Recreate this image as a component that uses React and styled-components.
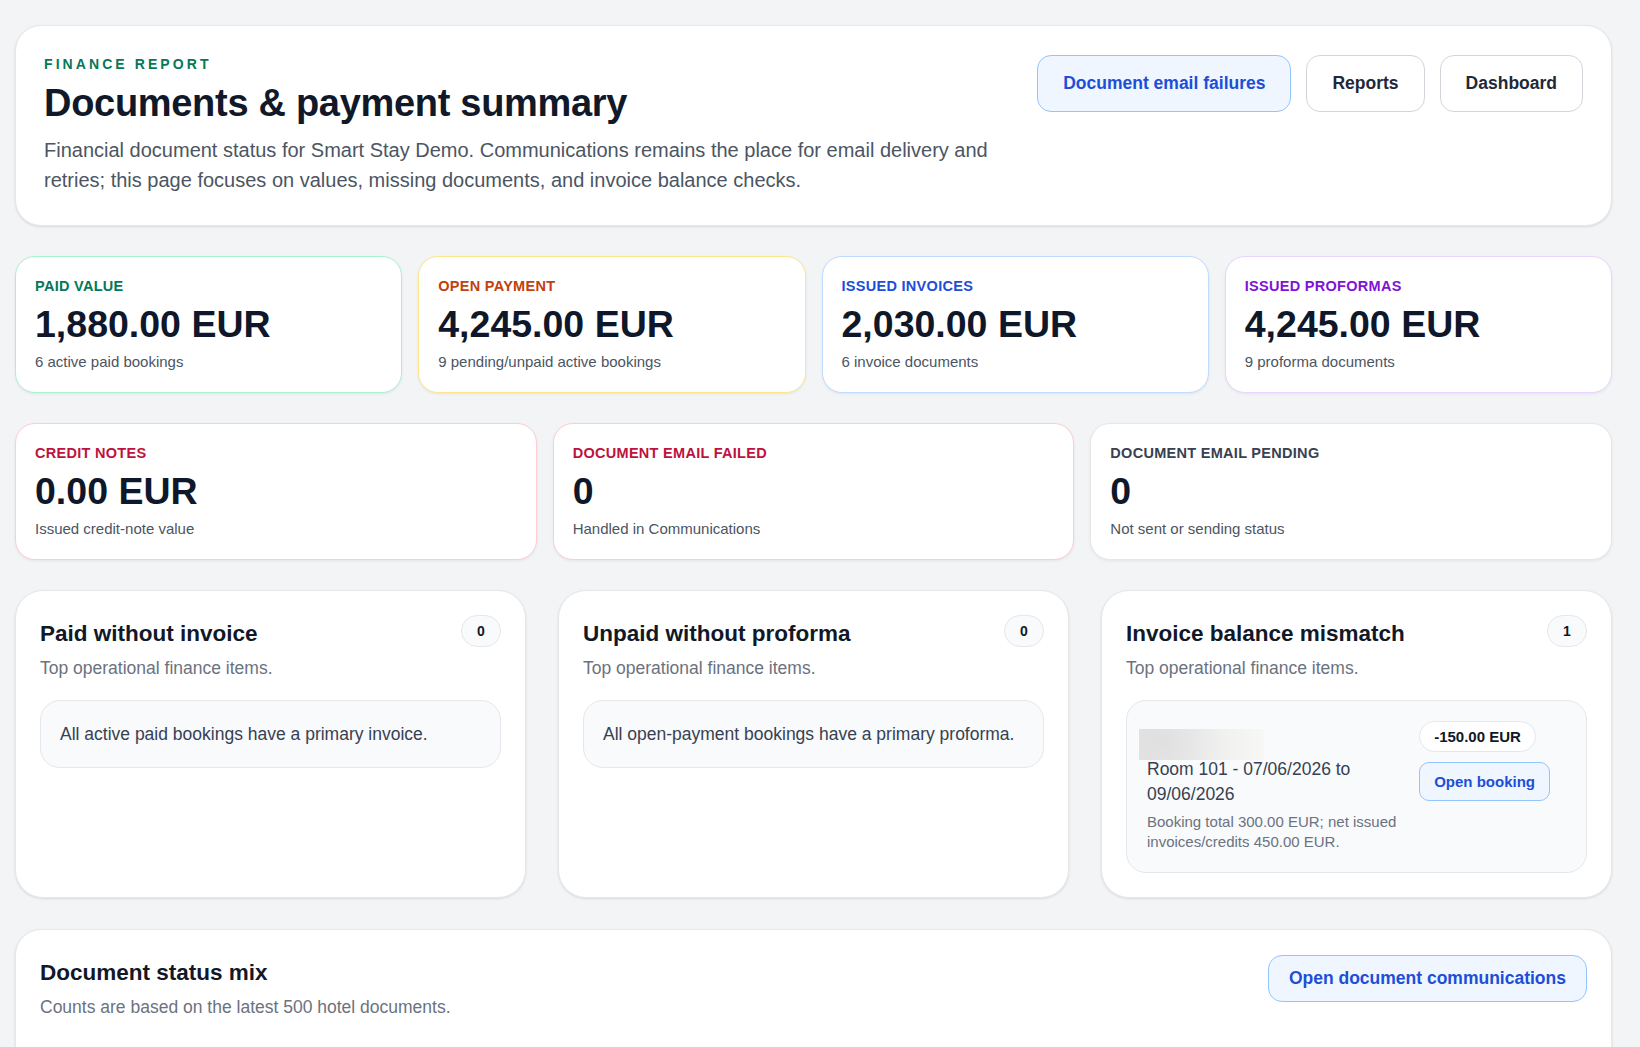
import React from 'react'
import styled, { createGlobalStyle } from 'styled-components'

const GlobalStyle = createGlobalStyle`
  * { box-sizing: border-box; }
  body {
    margin: 0;
    background: #f3f4f6;
    font-family: "Liberation Sans", Arial, sans-serif;
    color: #111827;
  }
`

const Page = styled.div`
  display: flex;
  flex-direction: column;
  gap: 30px;
  padding: 25px 28px 40px 15px;
`

const Card = styled.section`
  background: #fff;
  border: 1px solid #e5e7eb;
  border-radius: 26px;
  box-shadow: 0 1px 3px rgba(15, 23, 42, 0.08), 0 1px 2px rgba(15, 23, 42, 0.04);
`

const HeaderCard = styled(Card)`
  display: flex;
  justify-content: space-between;
  align-items: flex-start;
  gap: 24px;
  padding: 29px 28px 30px;
`

const Eyebrow = styled.div`
  margin-top: 1px;
  font-size: 14px;
  line-height: 17px;
  font-weight: 700;
  letter-spacing: 0.22em;
  text-transform: uppercase;
  color: #047857;
`

const Title = styled.h1`
  margin: 8px 0 0;
  font-size: 38px;
  line-height: 44px;
  font-weight: 700;
  letter-spacing: -0.3px;
  color: #111827;
`

const Lead = styled.p`
  margin: 10px 0 0;
  max-width: 975px;
  font-size: 20px;
  line-height: 30px;
  color: #4b5563;
`

const Actions = styled.div`
  display: flex;
  gap: 15px;
  flex-shrink: 0;
`

const Button = styled.button`
  font-family: inherit;
  font-size: ${p => p.size || 17.5}px;
  font-weight: 700;
  line-height: 21px;
  padding: ${p => p.pad || '17px 25px'};
  border-radius: ${p => p.radius || 14}px;
  border: 1px solid ${p => (p.primary ? '#93c5fd' : '#d1d5db')};
  background: ${p => (p.primary ? '#eff6ff' : '#fff')};
  color: ${p => (p.primary ? '#1d4ed8' : '#1f2937')};
  cursor: pointer;
  white-space: nowrap;
`

const StatGrid = styled.div`
  display: grid;
  grid-template-columns: repeat(${p => p.cols}, 1fr);
  gap: 16px;
`

const StatCard = styled.div`
  background: #fff;
  border: 1px solid ${p => p.border};
  border-radius: 20px;
  padding: 21px 19px 20px;
  box-shadow: 0 1px 3px rgba(15, 23, 42, 0.07);
`

const StatLabel = styled.div`
  font-size: 14.5px;
  line-height: 17px;
  font-weight: 700;
  letter-spacing: 0.02em;
  text-transform: uppercase;
  color: ${p => p.color};
`

const StatValue = styled.div`
  margin-top: 8px;
  font-size: 37.5px;
  line-height: 42px;
  font-weight: 700;
  color: #0f172a;
`

const StatNote = styled.div`
  margin-top: 7px;
  font-size: 15px;
  line-height: 20px;
  color: #4b5563;
`

const PanelGrid = styled.div`
  display: grid;
  grid-template-columns: repeat(3, 1fr);
  gap: 32px;
`

const Panel = styled(Card)`
  border-radius: 28px;
  padding: 24px;
`

const PanelHead = styled.div`
  display: flex;
  justify-content: space-between;
  align-items: flex-start;
  gap: 12px;
`

const PanelTitle = styled.h2`
  margin: 4px 0 0;
  font-size: 22.5px;
  line-height: 29px;
  font-weight: 700;
  color: #111827;
`

const PanelSub = styled.p`
  margin: 8px 0 0;
  font-size: 17.5px;
  line-height: 24px;
  color: #6b7280;
`

const CountBadge = styled.span`
  display: inline-flex;
  align-items: center;
  justify-content: center;
  min-width: 40px;
  height: 32px;
  padding: 0 12px;
  border-radius: 999px;
  border: 1px solid #e5e7eb;
  background: #f9fafb;
  font-size: 14px;
  font-weight: 700;
  color: #111827;
`

const EmptyBox = styled.div`
  margin-top: 20px;
  padding: 21px 19px;
  border: 1px solid #e5e7eb;
  border-radius: 20px;
  background: #f8fafc;
  font-size: 17.5px;
  line-height: 24px;
  color: #374151;
`

const ItemBox = styled.div`
  margin-top: 20px;
  display: grid;
  grid-template-columns: 1fr auto;
  gap: 16px;
  padding: 20px 36px 20px 20px;
  border: 1px solid #e5e7eb;
  border-radius: 20px;
  background: #f8fafc;
`

const Redacted = styled.div`
  margin: 8px 0 -3px -8px;
  width: 125px;
  height: 31px;
  background:
    radial-gradient(circle at 20% 40%, rgba(0, 0, 0, 0.03), transparent 60%),
    linear-gradient(90deg, #e5e5e5 0%, #eaeaea 40%, #f2f2f1 75%, #f7f7f5 100%);
`

const ItemTitle = styled.div`
  position: relative;
  font-size: 17.5px;
  line-height: 25px;
  color: #374151;
`

const ItemNote = styled.div`
  margin-top: 5px;
  font-size: 15px;
  line-height: 20px;
  color: #6b7280;
`

const ItemSide = styled.div`
  display: flex;
  flex-direction: column;
  align-items: flex-start;
  gap: 10px;
`

const AmountPill = styled.span`
  padding: 5px 14px;
  border-radius: 999px;
  border: 1px solid #e5e7eb;
  background: #fff;
  font-size: 15px;
  line-height: 19px;
  font-weight: 700;
  color: #111827;
`

const StatusCard = styled(Card)`
  display: flex;
  justify-content: space-between;
  align-items: flex-start;
  margin-top: 1px;
  padding: 25px 24px;
  min-height: 160px;
`

const StatusTitle = styled(PanelTitle)`
  margin-top: 3px;
`

const StatusSub = styled(PanelSub)`
  margin-top: 8px;
`

const topStats = [
  { label: 'Paid value', value: '1,880.00 EUR', note: '6 active paid bookings', color: '#047857', border: '#a7f3d0' },
  { label: 'Open payment', value: '4,245.00 EUR', note: '9 pending/unpaid active bookings', color: '#c2410c', border: '#fde68a' },
  { label: 'Issued invoices', value: '2,030.00 EUR', note: '6 invoice documents', color: '#1d4ed8', border: '#bfdbfe' },
  { label: 'Issued proformas', value: '4,245.00 EUR', note: '9 proforma documents', color: '#7e14d6', border: '#e9d5ff' },
]

const lowStats = [
  { label: 'Credit notes', value: '0.00 EUR', note: 'Issued credit-note value', color: '#be123c', border: '#fecdd3' },
  { label: 'Document email failed', value: '0', note: 'Handled in Communications', color: '#be123c', border: '#fecdd3' },
  { label: 'Document email pending', value: '0', note: 'Not sent or sending status', color: '#374151', border: '#e5e7eb' },
]

const Stat = ({ label, value, note, color, border }) => (
  <StatCard border={border}>
    <StatLabel color={color}>{label}</StatLabel>
    <StatValue>{value}</StatValue>
    <StatNote>{note}</StatNote>
  </StatCard>
)

const App = () => {
  return (
    <>
      <GlobalStyle />
      <Page>
        <HeaderCard>
          <div>
            <Eyebrow>Finance report</Eyebrow>
            <Title>Documents &amp; payment summary</Title>
            <Lead>
              Financial document status for Smart Stay Demo. Communications remains the place for email delivery and
              retries; this page focuses on values, missing documents, and invoice balance checks.
            </Lead>
          </div>
          <Actions>
            <Button primary>Document email failures</Button>
            <Button>Reports</Button>
            <Button>Dashboard</Button>
          </Actions>
        </HeaderCard>

        <StatGrid cols={4}>
          {topStats.map(s => <Stat key={s.label} {...s} />)}
        </StatGrid>

        <StatGrid cols={3}>
          {lowStats.map(s => <Stat key={s.label} {...s} />)}
        </StatGrid>

        <PanelGrid>
          <Panel>
            <PanelHead>
              <div>
                <PanelTitle>Paid without invoice</PanelTitle>
                <PanelSub>Top operational finance items.</PanelSub>
              </div>
              <CountBadge>0</CountBadge>
            </PanelHead>
            <EmptyBox>All active paid bookings have a primary invoice.</EmptyBox>
          </Panel>

          <Panel>
            <PanelHead>
              <div>
                <PanelTitle>Unpaid without proforma</PanelTitle>
                <PanelSub>Top operational finance items.</PanelSub>
              </div>
              <CountBadge>0</CountBadge>
            </PanelHead>
            <EmptyBox>All open-payment bookings have a primary proforma.</EmptyBox>
          </Panel>

          <Panel>
            <PanelHead>
              <div>
                <PanelTitle>Invoice balance mismatch</PanelTitle>
                <PanelSub>Top operational finance items.</PanelSub>
              </div>
              <CountBadge>1</CountBadge>
            </PanelHead>
            <ItemBox>
              <div>
                <Redacted />
                <ItemTitle>Room 101 - 07/06/2026 to 09/06/2026</ItemTitle>
                <ItemNote>Booking total 300.00 EUR; net issued invoices/credits 450.00 EUR.</ItemNote>
              </div>
              <ItemSide>
                <AmountPill>-150.00 EUR</AmountPill>
                <Button primary size={15} pad="8px 14px" radius={10}>Open booking</Button>
              </ItemSide>
            </ItemBox>
          </Panel>
        </PanelGrid>

        <StatusCard>
          <div>
            <StatusTitle>Document status mix</StatusTitle>
            <StatusSub>Counts are based on the latest 500 hotel documents.</StatusSub>
          </div>
          <Button primary pad="12px 20px">Open document communications</Button>
        </StatusCard>
      </Page>
    </>
  )
}

export default App
